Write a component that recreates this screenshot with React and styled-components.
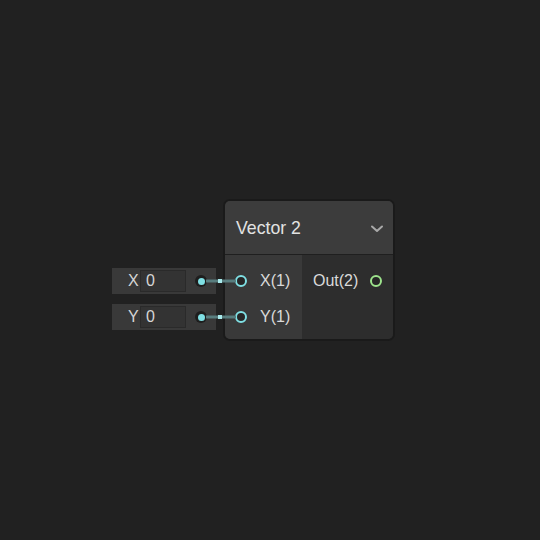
import React from 'react'
import styled, { createGlobalStyle } from 'styled-components'

const Global = createGlobalStyle`
  html, body {
    margin: 0;
    padding: 0;
    background: #212121;
  }
  body {
    font-family: "Liberation Sans", Arial, sans-serif;
  }
`

const Canvas = styled.div`
  width: 540px;
  height: 540px;
  box-sizing: border-box;
  padding: 199px 0 0 112px;
  background: #212121;
`

const Graph = styled.div`
  position: relative;
  display: flex;
  align-items: flex-start;
  gap: 7px;
`

const Inputs = styled.div`
  display: flex;
  flex-direction: column;
  gap: 10px;
  padding-top: 69px;
`

const InputBox = styled.div`
  width: 104px;
  height: 26px;
  box-sizing: border-box;
  display: flex;
  align-items: center;
  padding-left: 16px;
  background: #393939;
  color: #d6d6d6;
  font-size: 16px;
`

const InputLabel = styled.span`
  width: 12px;
`

const Field = styled.div`
  width: 46px;
  height: 22px;
  box-sizing: border-box;
  display: flex;
  align-items: center;
  padding-left: 5px;
  background: #333333;
  border: 1px solid #2a2a2a;
  color: #d6d6d6;
  font-size: 16px;
`

const OutDot = styled.span`
  width: 12px;
  height: 12px;
  margin-left: 9px;
  border-radius: 50%;
  background: #1e1e1e;
  display: flex;
  align-items: center;
  justify-content: center;
  &::after {
    content: '';
    width: 7px;
    height: 7px;
    border-radius: 50%;
    background: #7fe0e4;
  }
`

const Node = styled.div`
  width: 172px;
  height: 142px;
  box-sizing: border-box;
  border: 2px solid #1a1a1a;
  border-radius: 7px;
  overflow: hidden;
  display: flex;
  flex-direction: column;
  background: #2d2d2d;
`

const Header = styled.div`
  height: 54px;
  box-sizing: border-box;
  display: flex;
  align-items: center;
  justify-content: space-between;
  padding: 2px 9px 0 11px;
  background: #3c3c3c;
  border-bottom: 1px solid #1f1f1f;
  color: #e2e2e2;
  font-size: 17.7px;
`

const Body = styled.div`
  flex: 1;
  display: flex;
`

const Column = styled.div`
  display: flex;
  flex-direction: column;
  padding-top: 8px;
  width: ${p => p.$w}px;
  background: ${p => p.$bg};
`

const PortRow = styled.div`
  height: 36px;
  display: flex;
  align-items: center;
  gap: ${p => p.$gap}px;
  padding-left: ${p => p.$pl}px;
  color: #dadada;
  font-size: 16px;
`

const Port = styled.span`
  width: 12px;
  height: 12px;
  box-sizing: border-box;
  border-radius: 50%;
  border: 2px solid ${p => p.$color};
  background: #262626;
  flex-shrink: 0;
`

const Wires = styled.svg`
  position: absolute;
  left: 0;
  top: 0;
  pointer-events: none;
`

const Chevron = () => (
  <svg width="14" height="10" viewBox="0 0 14 10">
    <path d="M2 2.5 L7 7 L12 2.5" fill="none" stroke="#a8a8a8" strokeWidth="2" strokeLinecap="round" strokeLinejoin="round" />
  </svg>
)

const inputs = [
  { label: 'X', value: '0' },
  { label: 'Y', value: '0' },
]

export default function App() {
  return (
    <>
      <Global />
      <Canvas>
        <Graph>
          <Inputs>
            {inputs.map(i => (
              <InputBox key={i.label}>
                <InputLabel>{i.label}</InputLabel>
                <Field>{i.value}</Field>
                <OutDot />
              </InputBox>
            ))}
          </Inputs>
          <Node>
            <Header>
              <span>Vector 2</span>
              <Chevron />
            </Header>
            <Body>
              <Column $w={77} $bg="#393939">
                <PortRow $pl={10} $gap={13}>
                  <Port $color="#7fe0e4" />
                  <span>X(1)</span>
                </PortRow>
                <PortRow $pl={10} $gap={13}>
                  <Port $color="#7fe0e4" />
                  <span>Y(1)</span>
                </PortRow>
              </Column>
              <Column $w={91} $bg="#2d2d2d">
                <PortRow $pl={11} $gap={12}>
                  <span>Out(2)</span>
                  <Port $color="#9de38c" />
                </PortRow>
              </Column>
            </Body>
          </Node>
          <Wires width="130" height="142">
            {[82, 118].map(y => (
              <g key={y}>
                <rect x="94" y={y - 1.5} width="30" height="3" fill="#587d7e" />
                <rect x="106" y={y - 2} width="4" height="4" fill="#a9eaec" />
              </g>
            ))}
          </Wires>
        </Graph>
      </Canvas>
    </>
  )
}
